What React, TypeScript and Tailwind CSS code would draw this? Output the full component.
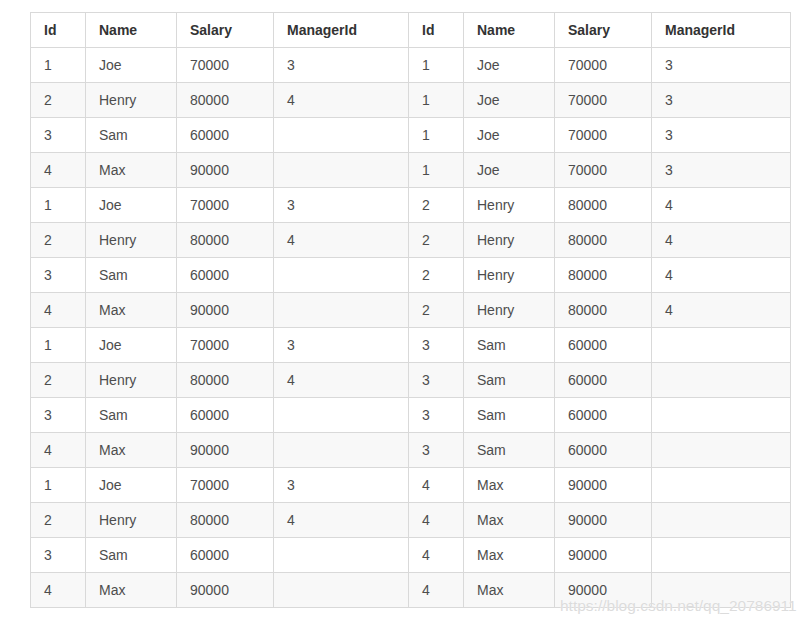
const people = [
  { id: "1", name: "Joe", salary: "70000", manager: "3" },
  { id: "2", name: "Henry", salary: "80000", manager: "4" },
  { id: "3", name: "Sam", salary: "60000", manager: "" },
  { id: "4", name: "Max", salary: "90000", manager: "" },
];

const rows = people.flatMap((b) => people.map((a) => [a, b]));

const headers = ["Id", "Name", "Salary", "ManagerId", "Id", "Name", "Salary", "ManagerId"];
const widths = [55, 91, 97, 135, 55, 91, 97, 139];

export default function App() {
  return (
    <div className="relative w-[811px] h-[622px] bg-white font-['Liberation_Sans',Arial,sans-serif] text-[14px] text-[#4d4d4d]">
      <table className="absolute left-[30px] top-[12px] w-[760px] table-fixed border-collapse">
        <colgroup>
          {widths.map((w, i) => (
            <col key={i} style={{ width: w }} />
          ))}
        </colgroup>
        <thead>
          <tr className="h-[35px]">
            {headers.map((h, i) => (
              <th key={i} className="border border-[#d9d9d9] pl-[13px] text-left font-bold text-[#333] align-middle">
                {h}
              </th>
            ))}
          </tr>
        </thead>
        <tbody>
          {rows.map(([a, b], i) => (
            <tr key={i} className={"h-[35px] " + (i % 2 === 1 ? "bg-[#f8f8f8]" : "bg-white")}>
              {[a.id, a.name, a.salary, a.manager, b.id, b.name, b.salary, b.manager].map((v, j) => (
                <td key={j} className="border border-[#d9d9d9] pl-[13px] align-middle">
                  {v}
                </td>
              ))}
            </tr>
          ))}
        </tbody>
      </table>
      <div className="absolute left-[560px] top-[594px] text-[15.5px] text-[#dcdcdc] [text-shadow:0_0_1px_#fff]">
        https://blog.csdn.net/qq_20786911
      </div>
    </div>
  );
}
